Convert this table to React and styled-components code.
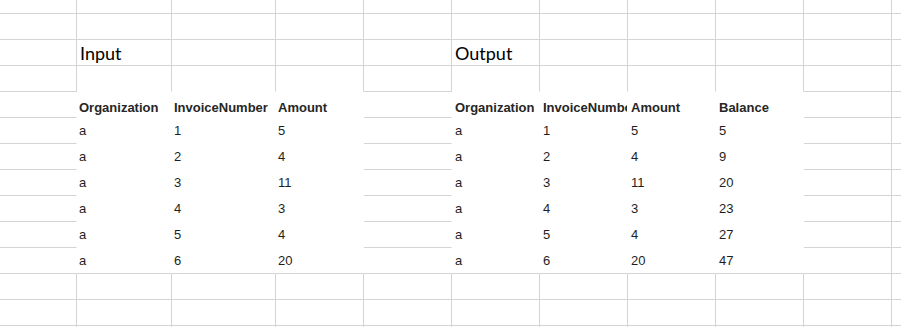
import React from "react";
import styled, { createGlobalStyle, css } from "styled-components";

const GlobalStyle = createGlobalStyle`
  html, body {
    margin: 0;
    padding: 0;
    background: #ffffff;
    overflow: hidden;
  }
  * {
    box-sizing: border-box;
  }
`;

const COLS = [77, 95, 104, 88, 88, 88, 88, 88, 88, 88, 88];
const ROWS = [14, 26, 26, 26, 26, 26, 26, 26, 26, 26, 26, 26, 26, 26];

const LEFT_COLS = [1, 2, 3];
const RIGHT_COLS = [5, 6, 7, 8];
const SIDE_COLS = [0, 4];
const HEAD_ROW = 4;
const LAST_ROW = 10;

const input = {
  head: ["Organization", "InvoiceNumber", "Amount"],
  rows: [
    ["a", "1", "5"],
    ["a", "2", "4"],
    ["a", "3", "11"],
    ["a", "4", "3"],
    ["a", "5", "4"],
    ["a", "6", "20"],
  ],
};

const output = {
  head: ["Organization", "InvoiceNumber", "Amount", "Balance"],
  rows: [
    ["a", "1", "5", "5"],
    ["a", "2", "4", "9"],
    ["a", "3", "11", "20"],
    ["a", "4", "3", "23"],
    ["a", "5", "4", "27"],
    ["a", "6", "20", "47"],
  ],
};

// window onto the sheet, cut at the viewport like the screenshot
const Viewport = styled.div`
  width: 100vw;
  height: 100vh;
  overflow: hidden;
`;

const Sheet = styled.div`
  display: grid;
  grid-template-columns: ${COLS.map((w) => w + "px").join(" ")};
  grid-template-rows: ${ROWS.map((h) => h + "px").join(" ")};
  width: max-content;
`;

const Cell = styled.div`
  display: flex;
  align-items: center;
  overflow: hidden;
  white-space: nowrap;
  padding: 0 ${(p) => (p.$inset ? 3 : 2)}px;
  border-right: 1px solid ${(p) => (p.$noRight ? "transparent" : "#d4d4d4")};
  border-bottom: 1px solid ${(p) => (p.$noBottom ? "transparent" : "#d4d4d4")};
  font-family: "Liberation Sans", Arial, sans-serif;
  font-size: 13px;
  line-height: 15px;
  color: #1e1e1e;

  ${(p) =>
    p.$kind === "head" &&
    css`
      align-items: flex-end;
      padding-bottom: 2px;
      font-weight: bold;
      color: #262626;
    `}

  ${(p) =>
    p.$kind === "title" &&
    css`
      align-items: flex-end;
      padding-left: 3px;
      padding-bottom: 1px;
      font-family: Lato, "Open Sans", sans-serif;
      font-size: 18px;
      line-height: normal;
      color: #000000;
    `}
`;

function cellFor(r, c) {
  const inLeft = LEFT_COLS.includes(c);
  const inRight = RIGHT_COLS.includes(c);
  const inTable = inLeft || inRight;
  const tableRow = r >= HEAD_ROW && r <= LAST_ROW;

  let text = "";
  let kind = "data";
  let noRight = false;
  let noBottom = false;

  if (r === 2 && c === 1) {
    text = "Input";
    kind = "title";
  }
  if (r === 2 && c === 5) {
    text = "Output";
    kind = "title";
  }

  if (r === HEAD_ROW - 1 && inTable) noBottom = true;

  if (tableRow && SIDE_COLS.includes(c)) noRight = true;

  if (tableRow && inTable) {
    noRight = true;
    noBottom = r !== LAST_ROW;
    const table = inLeft ? input : output;
    const idx = inLeft ? LEFT_COLS.indexOf(c) : RIGHT_COLS.indexOf(c);
    if (r === HEAD_ROW) {
      text = table.head[idx];
      kind = "head";
    } else {
      text = table.rows[r - HEAD_ROW - 1][idx];
    }
  }

  return { text, kind, noRight, noBottom, inset: inRight };
}

export default function App() {
  const cells = [];
  ROWS.forEach((_, r) => {
    COLS.forEach((__, c) => {
      const cell = cellFor(r, c);
      cells.push(
        <Cell
          key={`${r}-${c}`}
          $kind={cell.kind}
          $noRight={cell.noRight}
          $noBottom={cell.noBottom}
          $inset={cell.inset}
        >
          {cell.text}
        </Cell>
      );
    });
  });

  return (
    <>
      <GlobalStyle />
      <Viewport>
        <Sheet>{cells}</Sheet>
      </Viewport>
    </>
  );
}
